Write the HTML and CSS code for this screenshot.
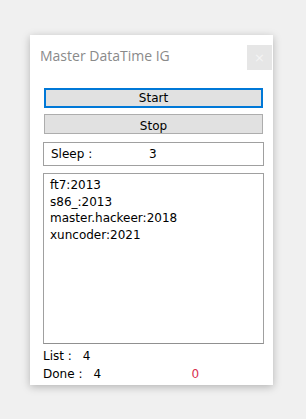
FILE: index.html
```html
<!DOCTYPE html>
<html>
<head>
<meta charset="utf-8">
<link rel="stylesheet" href="styles.css">
</head>
<body>
<div class="window">
  <div class="titlebar">
    <span class="title">Master DataTime IG</span>
    <span class="close">×</span>
  </div>
  <div class="content">
    <div class="btn btn-start">Start</div>
    <div class="btn btn-stop">Stop</div>
    <div class="sleep"><span class="sleep-label">Sleep :</span><span class="sleep-val">3</span></div>
    <div class="list">
      <div>ft7:2013</div>
      <div>s86_:2013</div>
      <div>master.hackeer:2018</div>
      <div>xuncoder:2021</div>
    </div>
    <div class="footer">
      <div class="frow"><span class="flabel">List :</span><span class="fval">4</span></div>
      <div class="frow"><span class="flabel">Done :</span><span class="fval">4</span><span class="red">0</span></div>
    </div>
  </div>
</div>
</body>
</html>
```
FILE: styles.css
```css
html, body { margin: 0; padding: 0; }
body {
  background: #f0f0f0;
  width: 306px;
  height: 419px;
  overflow: hidden;
  font-family: "DejaVu Sans", Tahoma, sans-serif;
  font-size: 12px;
  color: #000;
}
.window {
  margin: 35px 0 0 30px;
  width: 243px;
  height: 350px;
  background: #fff;
  box-shadow: 0 2px 8px rgba(0,0,0,0.25);
  box-sizing: border-box;
  display: flex;
  flex-direction: column;
}
.titlebar {
  display: flex;
  justify-content: space-between;
  align-items: flex-start;
  height: 53px;
  padding: 10px 1px 0 10px;
  box-sizing: border-box;
}
.title {
  font-family: "Open Sans", "Noto Sans", sans-serif;
  font-size: 14px;
  color: #8a8a8a;
  margin-top: 1px;
}
.close {
  width: 25px;
  height: 25px;
  background: #e6e6e6;
  color: #f4f4f4;
  font-size: 13px;
  line-height: 25px;
  text-align: center;
}
.content {
  padding: 0 9px 0 13px;
  display: flex;
  flex-direction: column;
}
.btn {
  margin: 0 1px;
  height: 20px;
  box-sizing: border-box;
  background: #e1e1e1;
  border: 1px solid #adadad;
  text-align: center;
  line-height: 18px;
  overflow: hidden;
}
.btn-start {
  border: 2px solid #0078d7;
  line-height: 16px;
  height: 20px;
}
.btn-stop {
  margin-top: 6px;
  height: 20px;
  line-height: 23px;
}
.sleep {
  margin-top: 8px;
  height: 24px;
  border: 1px solid #a0a0a0;
  box-sizing: border-box;
  display: flex;
  align-items: center;
  padding-left: 7px;
}
.sleep-label { width: 98px; }
.list {
  margin-top: 7px;
  height: 171px;
  border: 1px solid #a0a0a0;
  border-bottom-color: #909090;
  box-sizing: border-box;
  padding: 3px 6px;
  line-height: 16.5px;
}
.footer {
  padding-top: 4px;
  line-height: 17.5px;
}
.frow { display: flex; }
.fval { margin-left: 11px; width: 9px; }
.red { color: #d83050; margin-left: 89px; }
```
